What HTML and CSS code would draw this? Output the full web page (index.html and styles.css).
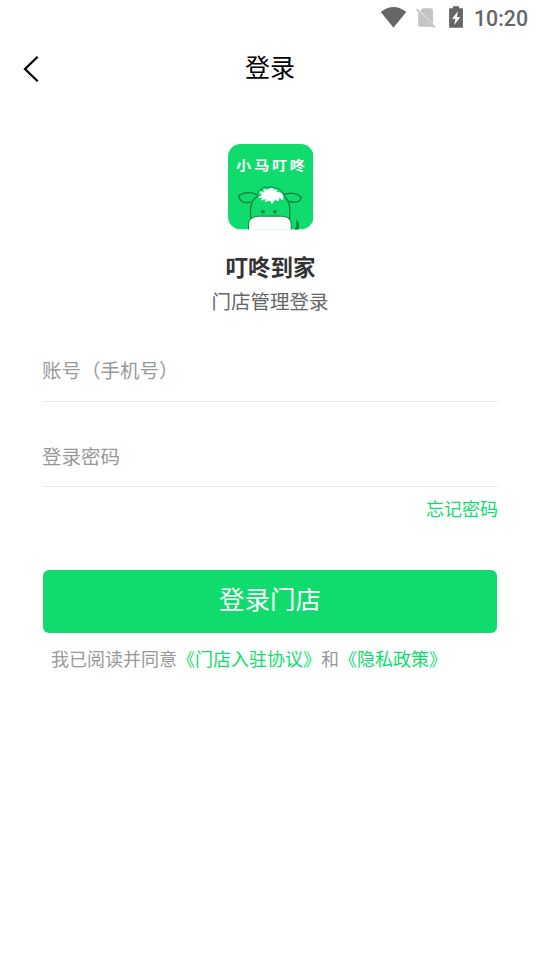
FILE: index.html
```html
<!DOCTYPE html>
<html lang="zh-CN">
<head>
<meta charset="utf-8">
<title>登录</title>
<link rel="stylesheet" href="styles.css">
</head>
<body>
<div class="status">
  <svg class="status-icons" viewBox="0 0 90 36" aria-hidden="true">
    <path class="dark" d="M.8 12Q13.500 2.200 26.200 12L13.500 27.800Z"/>
    <path class="pale" d="M43 8.200H51.200Q53 8.200 53 10V23.800L40 10.800ZM38.200 12L52.500 26.300Q52 26.800 51 26.800H40Q38.200 26.800 38.200 25Z"/>
    <path class="slash" d="M36.500 9.200L54.800 27.500"/>
    <path class="dark" d="M73 6.200H79V8.200H82.900V27.800H69.100V8.200H73Z"/>
    <path class="white" d="M78 11.200L72 18.700H75.300L74.200 25L80.300 16.900H76.900Z"/>
  </svg>
  <span class="time">10:20</span>
</div>
<header class="header">
  <svg class="back" viewBox="0 0 16 28" aria-hidden="true"><path d="M14.700 1.800L2 14L14.700 26.200"/></svg>
  <h1 class="title">登录</h1>
</header>
<main class="main">
  <svg class="logo" viewBox="24 24 257 257" aria-hidden="true">
    <defs><clipPath id="tile"><rect x="24" y="24" width="257" height="257" rx="38"/></clipPath></defs>
    <g clip-path="url(#tile)">
      <path class="green" d="M24 24H281V281H24Z"/>
      <text class="logo-text" x="42 90 137 184" transform="translate(0 102) scale(1.140 .95)">小马叮咚</text>
      <g class="line">
        <path d="M92 198C73 205 59 196 56 180C75 166 100 168 114 179"/>
        <path d="M208 196C228 204 241 197 244 184C229 169 202 169 187 179"/>
        <path d="M94 252C87 216 94 191 114 181M187 180C209 188 212 211 209 250"/>
        <path class="face" d="M86 286V264C88 246 103 241 122 241H181C201 241 212 247 214 264V286Z"/>
      </g>
      <path class="tail" d="M221 284C230 275 231 263 229 250C239 259 239 272 235 284Z"/>
      <path class="hair-line" d="M113 173L118 163L129 160L132 153L143 155Q150 150 163 155L174 158Q190 164 194 178"/>
      <path class="hair" d="M116 185L128 178L118 168L134 169L131 159L144 163Q147 156 161 158L158 164L171 161L169 169Q183 168 189 178Q192 185 187 192Q183 185 176 186L176 195L165 191L156 203L151 193L136 197L139 188L123 193L129 184Z"/>
      <g class="eye"><circle cx="129" cy="228" r="5.500"/><circle cx="165" cy="228" r="5.500"/></g>
    </g>
  </svg>
  <h2 class="name">叮咚到家</h2>
  <p class="subtitle">门店管理登录</p>
  <form class="form">
    <div class="field account">账号（手机号）</div>
    <div class="field password">登录密码</div>
    <a class="forgot">忘记密码</a>
    <button class="submit" type="button">登录门店</button>
    <p class="terms">我已阅读并同意<a>《门店入驻协议》</a>和<a>《隐私政策》</a></p>
  </form>
</main>
</body>
</html>
```
FILE: styles.css
```css
* { box-sizing: border-box; }
body {
  margin: 0;
  min-height: 960px;
  background: #fff;
  font-family: "Noto Sans CJK SC", sans-serif;
}
h1, h2, p { margin: 0; font-weight: 400; }
.status {
  display: flex;
  height: 36px;
  padding-left: 380px;
}
.status-icons { width: 90px; height: 36px; }
.dark { fill: #666; }
.pale { fill: #c4c4c4; }
.white { fill: #fff; }
.slash { stroke: #c4c4c4; stroke-width: 1.8; }
.time {
  margin-left: 4px;
  font: 500 21.300px/37px Roboto, sans-serif;
  color: #666;
}
.header {
  display: grid;
  grid-template-columns: 64px 1fr 64px;
  align-items: center;
  height: 64px;
}
.back {
  width: 16px;
  height: 28px;
  margin: 2px 0 0 23px;
  fill: none;
  stroke: #000;
  stroke-width: 2.2;
}
.title {
  margin-top: -4px;
  font-size: 25px;
  line-height: 36px;
  text-align: center;
  color: #000;
}
.main {
  display: flex;
  flex-direction: column;
  align-items: center;
  padding-top: 44px;
}
.logo { width: 85.500px; height: 85.500px; margin-left: 1px; }
.green { fill: #10dc6e; }
.logo-text { fill: #fff; font-size: 40px; font-weight: 700; }
.line { fill: none; stroke: #087f40; stroke-width: 4; }
.face { fill: #fff; stroke-width: 3; }
.hair { fill: #fff; stroke: #fff; stroke-width: 2; }
.hair-line { fill: none; stroke: #087f40; stroke-width: 3; }
.eye, .tail { fill: #087f40; }
.name {
  margin: 19px 0 0 1px;
  font-size: 22.500px;
  font-weight: 700;
  line-height: 34px;
  color: #333;
}
.subtitle {
  margin-top: 3px;
  font-size: 19.500px;
  line-height: 30px;
  color: #666;
}
.form {
  display: flex;
  flex-direction: column;
  width: 456px;
}
.field {
  border-bottom: 1px solid #ebebeb;
  font-size: 19.500px;
  line-height: 30px;
  color: #999;
}
.account { height: 86px; padding-top: 39px; }
.password { height: 85px; padding-top: 39px; }
.forgot {
  align-self: flex-end;
  margin-top: 7px;
  font-size: 18px;
  line-height: 28px;
  color: #10dc6e;
}
.submit {
  height: 63px;
  margin: 48px 1px 0;
  padding: 0 0 6px;
  border: 0;
  border-radius: 6px;
  background: #10dc6e;
  color: #fff;
  font: 400 25.500px/36px "Noto Sans CJK SC", sans-serif;
}
.terms {
  margin: 11px 0 0 9px;
  font-size: 18px;
  line-height: 28px;
  color: #999;
  white-space: nowrap;
}
.terms a { color: #10dc6e; }
```
